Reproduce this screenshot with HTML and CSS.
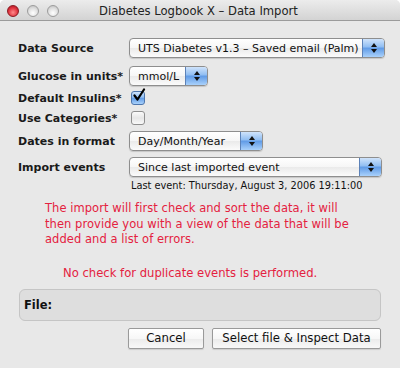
FILE: index.html
```html
<!DOCTYPE html>
<html>
<head>
<meta charset="utf-8">
<link rel="stylesheet" href="styles.css">
</head>
<body>
<div class="window">
  <div class="titlebar">
    <div class="lights">
      <span class="light red"></span>
      <span class="light grey"></span>
      <span class="light grey"></span>
    </div>
    <div class="title">Diabetes Logbook X – Data Import</div>
  </div>
  <div class="content">
    <div class="form">
      <div class="row r1">
        <label class="lbl">Data Source</label>
        <div class="popup w-source"><span class="ptext">UTS Diabetes v1.3 – Saved email (Palm)</span><span class="arrows"><svg width="8" height="12" viewBox="0 0 8 12"><path d="M4 1 L7 5 L1 5 Z M4 11 L7 7 L1 7 Z" fill="#111"/></svg></span></div>
      </div>
      <div class="row r2">
        <label class="lbl">Glucose in units*</label>
        <div class="popup w-units"><span class="ptext">mmol/L</span><span class="arrows"><svg width="8" height="12" viewBox="0 0 8 12"><path d="M4 1 L7 5 L1 5 Z M4 11 L7 7 L1 7 Z" fill="#111"/></svg></span></div>
      </div>
      <div class="row r3">
        <label class="lbl lbl-cb">Default Insulins*</label>
        <span class="cb checked"><svg width="16" height="16" viewBox="0 0 16 16"><path d="M3.5 7.5 L6.5 11.5 L13 1.5" stroke="#000" stroke-width="2.2" fill="none" stroke-linecap="round" stroke-linejoin="round"/></svg></span>
      </div>
      <div class="row r4">
        <label class="lbl lbl-cb">Use Categories*</label>
        <span class="cb"></span>
      </div>
      <div class="row r5">
        <label class="lbl">Dates in format</label>
        <div class="popup w-dates"><span class="ptext">Day/Month/Year</span><span class="arrows"><svg width="8" height="12" viewBox="0 0 8 12"><path d="M4 1 L7 5 L1 5 Z M4 11 L7 7 L1 7 Z" fill="#111"/></svg></span></div>
      </div>
      <div class="row r6">
        <label class="lbl">Import events</label>
        <div class="popup w-import"><span class="ptext">Since last imported event</span><span class="arrows"><svg width="8" height="12" viewBox="0 0 8 12"><path d="M4 1 L7 5 L1 5 Z M4 11 L7 7 L1 7 Z" fill="#111"/></svg></span></div>
      </div>
      <div class="lastevent">Last event: Thursday, August 3, 2006 19:11:00</div>
    </div>
    <p class="warn">The import will first check and sort the data, it will<br>then provide you with a view of the data that will be<br>added and a list of errors.</p>
    <p class="warn2">No check for duplicate events is performed.</p>
    <div class="filebox"><span class="filelbl">File:</span></div>
    <div class="buttons">
      <button class="btn cancel">Cancel</button>
      <button class="btn select">Select file &amp; Inspect Data</button>
    </div>
  </div>
</div>
</body>
</html>
```

FILE: styles.css
```css
html, body {
  margin: 0;
  padding: 0;
  background: #ffffff;
}
body {
  font-family: "DejaVu Sans", "Liberation Sans", sans-serif;
  color: #111;
  width: 400px;
  height: 368px;
  overflow: hidden;
}
.window {
  width: 400px;
  height: 368px;
  background: #e8e8e8;
  border-radius: 5px 5px 0 0;
  overflow: hidden;
  display: flex;
  flex-direction: column;
}
.titlebar {
  height: 20px;
  flex: 0 0 20px;
  background: linear-gradient(#ececec, #d3d3d3);
  border-bottom: 1px solid #9b9b9b;
  display: flex;
  align-items: center;
}
.lights {
  display: flex;
  gap: 8px;
  padding-left: 7px;
  padding-top: 1px;
}
.light {
  width: 12px;
  height: 12px;
  border-radius: 50%;
  box-sizing: border-box;
}
.light.red {
  background: radial-gradient(circle at 50% 65%, #ff8a8a 0%, #e0343f 55%, #a10f1c 100%);
  border: 1px solid #8a1a20;
}
.light.grey {
  background: radial-gradient(circle at 50% 70%, #ffffff 0%, #e2e2e2 50%, #b9b9b9 100%);
  border: 1px solid #9c9c9c;
}
.title {
  flex: 1;
  text-align: center;
  font-size: 11.6px;
  color: #222;
  margin-left: -62px;
  padding-top: 1px;
  white-space: nowrap;
}
.content {
  flex: 1;
  display: flex;
  flex-direction: column;
}
.form {
  padding-left: 18px;
  padding-top: 17px;
  display: flex;
  flex-direction: column;
}
.row {
  display: flex;
  align-items: center;
  height: 20px;
}
.r2 { margin-top: 8px; }
.r3 { margin-top: 2px; }
.r4 { margin-top: 0; }
.r5 { margin-top: 3px; }
.r6 { margin-top: 6px; }
.lbl {
  width: 111px;
  flex: 0 0 111px;
  font-weight: bold;
  font-size: 11px;
  color: #1a1a1a;
  white-space: nowrap;
}
.popup {
  height: 20px;
  box-sizing: border-box;
  border: 1px solid #8e8e8e;
  border-radius: 4px;
  background: linear-gradient(#ffffff 0%, #f6f6f6 50%, #eaeaea 51%, #fbfbfb 100%);
  box-shadow: 0 1px 1px rgba(0,0,0,0.15);
  display: flex;
  align-items: center;
  overflow: hidden;
}
.ptext {
  flex: 1;
  min-width: 0;
  overflow: hidden;
  font-size: 11px;
  padding-left: 8px;
  white-space: nowrap;
  color: #111;
}
.arrows {
  width: 21px;
  flex: 0 0 21px;
  height: 100%;
  display: flex;
  align-items: center;
  justify-content: center;
  background: linear-gradient(#cfe3fb 0%, #8fbdf2 45%, #5f9ae6 50%, #a9d1fb 100%);
  border-left: 1px solid #5c82b8;
}
.w-source { width: 256px; }
.w-units { width: 79px; }
.w-dates { width: 134px; }
.w-import { width: 253px; }
.cb {
  width: 14px;
  height: 14px;
  box-sizing: border-box;
  border: 1px solid #8f8f8f;
  border-radius: 3px;
  background: linear-gradient(#fafafa, #e6e6e6 50%, #f9f9f9);
  margin-left: 2px;
  position: relative;
}
.cb.checked {
  background: linear-gradient(#cfe3fb 0%, #8fbdf2 45%, #5f9ae6 50%, #a9d1fb 100%);
  border-color: #4d76ad;
}
.cb svg {
  position: absolute;
  left: -1px;
  top: -4px;
}
.lastevent {
  margin-top: 2px;
  padding-left: 113px;
  font-size: 9.8px;
  line-height: 14px;
  color: #111;
  white-space: nowrap;
}
.warn {
  margin: 8px 0 0 0;
  padding-left: 45px;
  font-size: 11.5px;
  letter-spacing: 0.05px;
  line-height: 15.5px;
  color: #e4213f;
  white-space: nowrap;
}
.warn2 {
  margin: 18px 0 0 0;
  padding-left: 63px;
  font-size: 11.6px;
  line-height: 15px;
  color: #e4213f;
  white-space: nowrap;
}
.filebox {
  margin: 8px 19px 0 19px;
  height: 32px;
  box-sizing: border-box;
  border: 1px solid #c5c5c5;
  border-radius: 6px;
  background: #dedede;
  display: flex;
  align-items: center;
  padding-left: 4px;
}
.filelbl {
  font-weight: bold;
  font-size: 11.5px;
  color: #111;
}
.buttons {
  display: flex;
  justify-content: flex-end;
  gap: 8px;
  padding-right: 19px;
  margin-top: 7px;
}
.btn {
  font-family: "DejaVu Sans", "Liberation Sans", sans-serif;
  font-size: 11.7px;
  height: 21px;
  border: 1px solid #9a9a9a;
  border-radius: 2px;
  background: linear-gradient(#ffffff 0%, #f7f7f7 50%, #ebebeb 51%, #f8f8f8 100%);
  color: #111;
  padding: 0;
  box-shadow: 0 1px 1px rgba(0,0,0,0.12);
}
.cancel { width: 76px; }
.select { width: 169px; }
```
